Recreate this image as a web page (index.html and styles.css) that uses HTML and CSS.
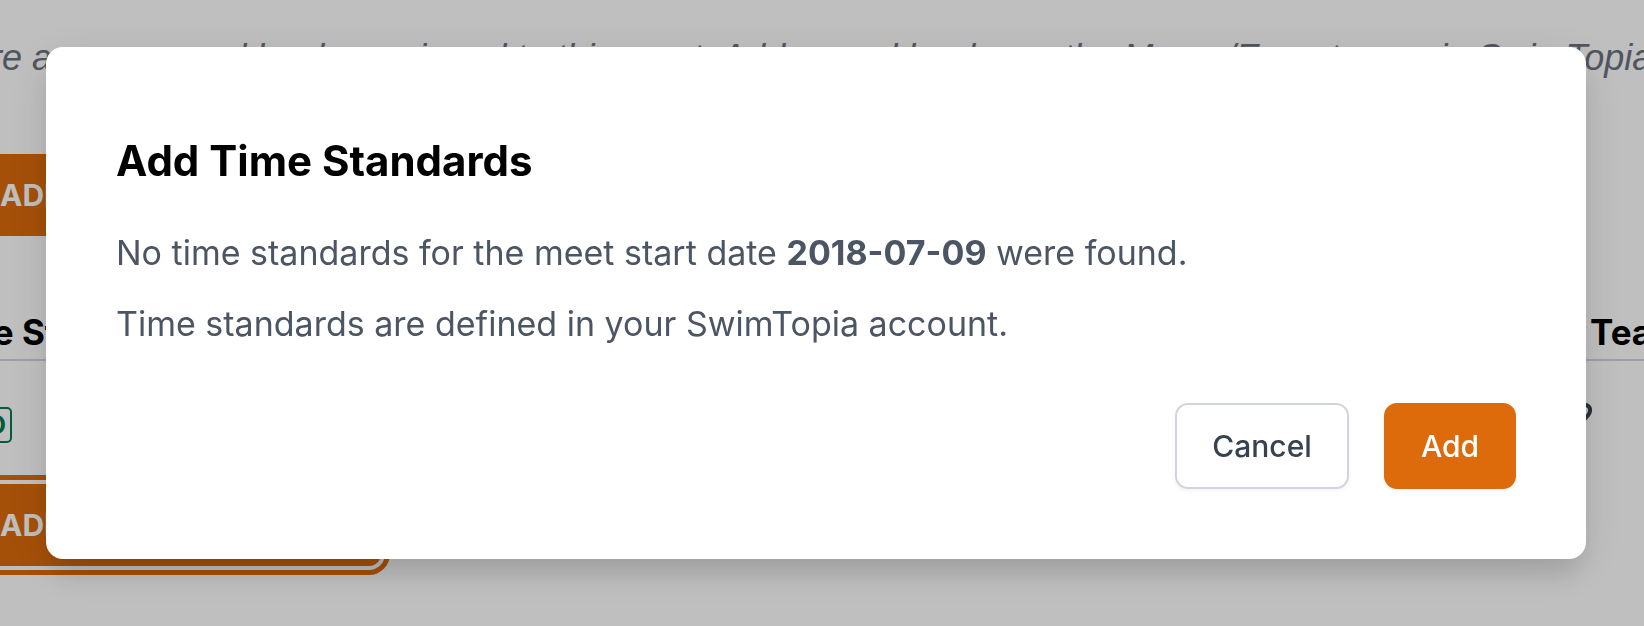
FILE: index.html
```
<!DOCTYPE html>
<html lang="en">
<head>
  <meta charset="UTF-8">
  <meta name="viewport" content="width=device-width, initial-scale=1.0">
  <title>Time Standards</title>
  <link rel="stylesheet" href="styles.css">
</head>
<body>
  <div class="page">
    <main class="content">
      <p class="note">There are no record books assigned to this meet. Add record books on the Merge/Export page in SwimTopia.</p>
      <button class="page-btn" type="button">ADD RECORD BOOK</button>
      <table class="standards">
        <thead>
          <tr><th>Time Standard</th><th class="col-team">Team</th></tr>
        </thead>
        <tbody>
          <tr>
            <td><span class="badge">STD</span></td>
            <td class="col-team">
              <svg class="team-icon" viewBox="0 0 24 24" aria-hidden="true"><path d="M2 8a5 5 0 0 1 10-2 5 5 0 0 1 10 2c0 4-4 6-10 13C6 14 2 12 2 8z"/></svg>
            </td>
          </tr>
        </tbody>
      </table>
      <button class="page-btn focused" type="button">ADD TIME STANDARD</button>
    </main>
  </div>

  <div class="overlay">
    <div class="modal" role="dialog" aria-modal="true" aria-labelledby="modalTitle">
      <h2 class="modal-title" id="modalTitle">Add Time Standards</h2>
      <div class="modal-text">
        <p>No time standards for the meet start date <strong>2018-07-09</strong> were found.</p>
        <p>Time standards are defined in your SwimTopia account.</p>
      </div>
      <div class="modal-actions">
        <button class="btn btn-cancel" type="button">Cancel</button>
        <button class="btn btn-add" type="button">Add</button>
      </div>
    </div>
  </div>
</body>
</html>
```
FILE: styles.css
```
* {
  box-sizing: border-box;
}
body {
  margin: 0;
  min-height: 100vh;
  overflow: hidden;
  background: #fff;
  color: #000;
  font-family: Inter, "Liberation Sans", sans-serif;
  font-size: 34px;
}
p, h2 {
  margin: 0;
}
button {
  font-family: inherit;
  cursor: pointer;
}

/* Page behind the modal, wider than the window */
.page {
  height: 100vh;
  overflow: hidden;
}
.content {
  margin: 0 -72px;
  padding-top: 32px;
}
.note {
  color: #6b7280;
  font-family: "Liberation Sans", sans-serif;
  font-size: 36px;
  font-style: italic;
  line-height: 52px;
  white-space: nowrap;
}
.page-btn {
  display: block;
  height: 82px;
  margin-top: 70px;
  padding: 0 60px 0 72px;
  border: none;
  border-radius: 12px;
  background: #dd6b0b;
  color: #fff;
  font-size: 30px;
  font-weight: 700;
}
.page-btn.focused {
  margin-top: 40px;
  box-shadow: 0 0 0 4px #fff, 0 0 0 9px #dd6b0b;
}
.standards {
  width: 100%;
  margin-top: 70px;
  border-collapse: collapse;
}
.standards th {
  padding: 0 0 1px;
  border-bottom: 2px solid #d1d5db;
  text-align: left;
  font-size: 35px;
  font-weight: 700;
  line-height: 52px;
}
.standards td {
  height: 84px;
  padding: 46px 0 0;
  vertical-align: top;
}
.standards .col-team {
  width: 148px;
}
.standards th.col-team {
  padding-left: 22px;
}
.standards td.col-team {
  padding-top: 42px;
}
.badge {
  display: block;
  width: 84px;
  padding: 0 4px;
  border: 2px solid #057a55;
  border-radius: 5px;
  color: #057a55;
  font-size: 26px;
  font-weight: 700;
  line-height: 32px;
  text-align: right;
}
.team-icon {
  display: block;
  width: 24px;
  height: 24px;
  fill: none;
  stroke: #374151;
  stroke-width: 4;
}

/* Modal */
.overlay {
  position: fixed;
  inset: 0;
  display: flex;
  align-items: flex-start;
  padding: 47px 58px 0 46px;
  background: rgba(0, 0, 0, 0.25);
}
.modal {
  width: 100%;
  padding: 70px;
  border-radius: 17px;
  background: #fff;
  box-shadow: 0 20px 25px -5px rgba(0, 0, 0, 0.1), 0 10px 48px rgba(0, 0, 0, 0.1);
}
.modal-title {
  font-size: 42px;
  font-weight: 700;
  line-height: 88px;
}
.modal-text {
  display: flex;
  flex-direction: column;
  gap: 19px;
  margin-top: 22px;
  color: #4b5563;
  line-height: 52px;
}
.modal-actions {
  display: flex;
  justify-content: flex-end;
  gap: 35px;
  margin-top: 53px;
}
.btn {
  height: 86px;
  padding: 0 35px;
  border: 2px solid transparent;
  border-radius: 13px;
  font-size: 30px;
  font-weight: 500;
  box-shadow: 0 2px 4px rgba(0, 0, 0, 0.05);
}
.btn-cancel {
  border-color: #d1d5db;
  background: #fff;
  color: #374151;
}
.btn-add {
  border-color: #dd6b0b;
  background: #dd6b0b;
  color: #fff;
}
```
